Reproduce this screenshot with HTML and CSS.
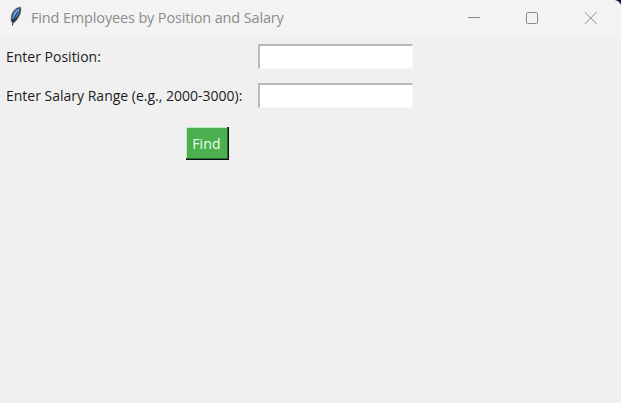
FILE: index.html
```html
<!DOCTYPE html>
<html lang="en">
<head>
<meta charset="utf-8">
<title>Find Employees by Position and Salary</title>
<link rel="stylesheet" href="styles.css">
</head>
<body>
<div class="window">
  <header class="titlebar">
    <svg class="feather" width="14" height="21" viewBox="0 0 14 21">
      <path d="M2.100 15.500 Q1.200 9 5 4.300 Q8 1.300 11.700 1 Q12.800 5 10.200 10 Q8 14.500 4.800 16.800Z" fill="#2b3038" stroke="#77736d" stroke-width=".7"/>
      <path d="M3.200 12.500 Q3.200 7.500 6.500 4.300 L10.600 1.900 Q11 6 8.800 9.800 L5 14Z" fill="#4f8ed6"/>
      <path d="M3.400 19.500 L4.300 15 Q6 10 9 6" fill="none" stroke="#17304f" stroke-width="1"/>
      <path d="M5.500 8.500 L8.500 3.800" stroke="#8fb9e8" stroke-width="1"/>
    </svg>
    <span class="title">Find Employees by Position and Salary</span>
    <div class="controls">
      <svg class="control" width="58" height="36" viewBox="0 0 58 36"><path d="M23 17.500H35"/></svg>
      <svg class="control" width="58" height="36" viewBox="0 0 58 36"><rect x="23.500" y="12.500" width="11" height="11" rx="1"/></svg>
      <svg class="control" width="58" height="36" viewBox="0 0 58 36"><path d="M24 12.300L35.500 23.800M35.500 12.300L24 23.800"/></svg>
    </div>
  </header>
  <main class="form">
    <label class="label" for="position">Enter Position:</label>
    <input class="entry" id="position" type="text">
    <label class="label" for="salary">Enter Salary Range (e.g., 2000-3000):</label>
    <input class="entry" id="salary" type="text">
    <div class="actions"><button class="find" type="button">Find</button></div>
  </main>
  <svg class="corner" width="6" height="5" viewBox="0 0 6 5"><path d="M0 0H6V5Q4.500 1.200 0 0Z" fill="#06104a"/></svg>
</div>
</body>
</html>
```
FILE: styles.css
```css
body {
  margin: 0;
  background: #f0f0f0;
  font-family: "Open Sans", "Noto Sans", sans-serif;
}

.window {
  position: relative;
  height: 403px;
  overflow: hidden;
}

.titlebar {
  display: flex;
  height: 38px;
  padding-left: 9px;
  background: #f3f3f3;
}

.feather {
  margin-top: 6px;
}

.title {
  margin-left: 8px;
  font-size: 14.5px;
  line-height: 36px;
  letter-spacing: -0.15px;
  white-space: nowrap;
  color: #8c8c8c;
}

.controls {
  display: flex;
  margin-left: auto;
  margin-right: 2px;
}

.control {
  fill: none;
  stroke: #8a8a8a;
  stroke-width: 1;
}

.form {
  display: grid;
  grid-template-columns: 252px 155px;
  grid-template-rows: 25px 25px 33px;
  row-gap: 14px;
  padding: 6px 0 0 6px;
}

.label {
  font-size: 14px;
  line-height: 25px;
  white-space: nowrap;
  color: #1c1c20;
}

.entry {
  box-sizing: border-box;
  width: 155px;
  height: 25px;
  padding: 0 4px;
  border: 0 solid #f8f8f8;
  border-width: 2px 1px 1px 2px;
  border-top-color: #b9b9b9;
  border-left-color: #b9b9b9;
  border-radius: 0;
  background: #fff;
}

.actions {
  display: flex;
  grid-column: 1 / -1;
  margin: 5px 0 0 180px;
}

.find {
  box-sizing: border-box;
  width: 43px;
  height: 33px;
  padding: 0 2px 0 0;
  border: 0;
  background: #4caf50;
  box-shadow: inset -1px -1px #061006, inset -2px -2px #2d6930, inset 1px 1px #b9f0ba;
  font: 14px/31px "Open Sans", "Noto Sans", sans-serif;
  letter-spacing: 0.2px;
  color: #edffee;
}

.corner {
  position: absolute;
  top: 0;
  right: 0;
}
```
